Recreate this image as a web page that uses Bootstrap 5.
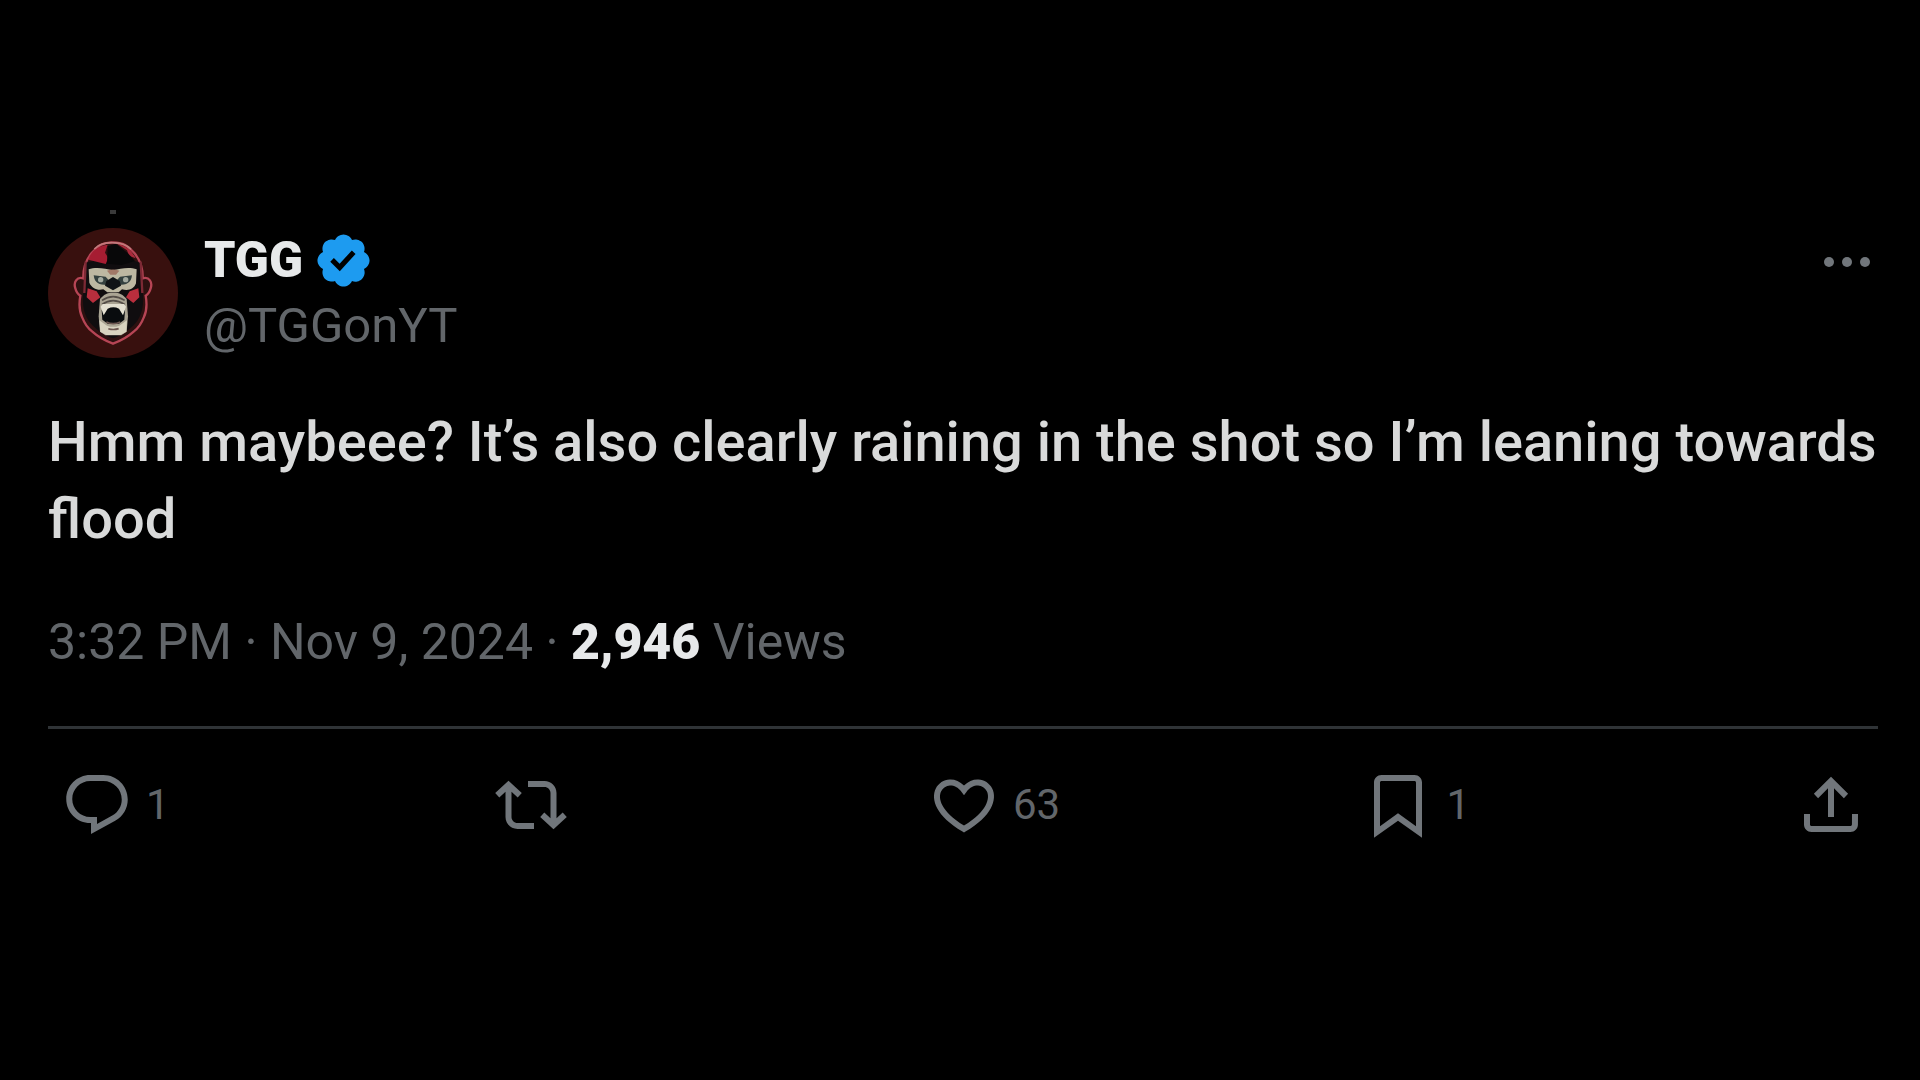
<!DOCTYPE html>
<html lang="en" data-bs-theme="dark">
<head>
<meta charset="utf-8">
<meta name="viewport" content="width=device-width, initial-scale=1">
<title>TGG on X</title>
<link href="https://cdn.jsdelivr.net/npm/bootstrap@5.3.0/dist/css/bootstrap.min.css" rel="stylesheet">
<style>
  body { background: #000; color: #e7e9ea; font-family: Roboto, "Liberation Sans", sans-serif; }
  .post { padding: 210px 42px 48px 48px; }
  .thread-line { width: 6px; height: 4px; margin: 0 0 14px 62px; background: #3a3a3a; }
  .avatar { width: 130px; height: 130px; }
  .author { gap: 26px; }
  .author-text { font-size: 49px; line-height: 65px; }
  .author-name { gap: 10px; font-size: 50px; font-weight: 900; }
  .verified { width: 61px; height: 61px; fill: #1d9bf0; }
  .muted { color: #62666a; }
  .more { width: 58px; height: 68px; margin-right: 2px; color: #71767b; }
  .post-text { margin: 46px 0 52px; font-size: 56px; line-height: 77px; font-weight: 500; color: #d9dada; }
  .meta { font-size: 50px; line-height: 65px; padding-bottom: 51px; border-bottom: 3px solid #2f3336; }
  .meta strong { font-weight: 900; color: #e7e9ea; }
  .actions { padding: 40px 11px 0 13px; }
  .action { gap: 13px; color: #71767b; font-size: 42px; line-height: 72px; }
  .action span { color: #62666a; }
  .action svg { width: 72px; height: 72px; }
  svg { display: block; fill: currentColor; flex-shrink: 0; }
</style>
</head>
<body>
<main class="container-fluid post">
  <article>
    <div class="thread-line"></div>
    <header class="d-flex justify-content-between align-items-start">
      <div class="d-flex author">
        <svg class="avatar" viewBox="55 83 390 390" role="img" aria-label="TGG avatar">
          <circle cx="250" cy="278" r="195" fill="#38100e"/>
          <path d="M250 126c-30 0-46 10-64 32-18 22-26 42-25 76-20-6-30 12-24 30 3 13 8 18 15 22-5 28-2 50 6 66 6 16 14 30 30 42 20 18 40 28 62 36 22-8 42-18 62-36 16-12 24-26 30-42 8-16 11-38 6-66 7-4 12-9 15-22 6-18-4-36-24-30 1-34-7-54-25-76-18-22-34-32-64-32z" fill="#2d1010" stroke="#b64555" stroke-width="7"/>
          <path d="M168 188c28-10 52-8 82-8s56-4 82 8l8 96c2 36-4 62-22 84-20 22-42 38-68 46-26-8-48-24-68-46-18-22-24-48-22-84z" fill="#100d0f"/>
          <path d="M176 178c8-28 32-42 58-45l-8 24 10 16-8 18z" fill="#a61d32"/>
          <path d="M262 130c28 4 44 20 56 44l-20-8-6-16z" fill="#a82a3b"/>
          <path d="M234 138l24-8 36 28 22 24-40 12-44-4z" fill="#080809"/>
          <path d="M194 146q18-20 54-19q36 0 56 20" fill="none" stroke="#c27a7c" stroke-width="5"/>
          <path d="M168 184l-4 94M333 184l5 94" fill="none" stroke="#7c2934" stroke-width="7"/>
          <path d="M177 207c20-8 50-3 73 3 23-6 50-11 71-3l-2 42c-6 18-23 23-42 18l-10 9h-34l-12-9c-19 4-34-3-42-20z" fill="#bdb8a2"/>
          <path d="M192 225l36 4 15 17-12 8c-22 0-36-5-39-29zM307 225l-36 4-15 17 12 8c22 0 36-5 39-29z" fill="#34413f"/>
          <circle cx="213" cy="238" r="8" fill="#a3aaa0"/><circle cx="288" cy="238" r="8" fill="#a3aaa0"/>
          <path d="M230 242l20-12 20 12 4 14-24 14-24-14z" fill="#101316"/>
          <path d="M232 211q18-7 37 0l-10 12h-17z" fill="#a27968"/>
          <path d="M174 264l27 9 11 18-22 17-19-17zM326 264l-26 9-11 18 22 17 18-17z" fill="#b92e3d"/>
          <path d="M211 296c12-14 20-19 40-19s28 5 40 19l4 52-4 46-16 11h-48l-16-11-4-46z" fill="#aaa493"/>
          <path d="M217 300q33-22 68 0M217 312q33-22 68 0" fill="none" stroke="#554e48" stroke-width="5"/>
          <path d="M216 330q34-28 70 0l-2 28-16 12h-34l-16-12z" fill="#090c0e"/>
          <path d="M213 319l9 26 12-20q17-8 34 0l12 20 9-26-6-8h-64z" fill="#e4e0d1"/>
          <path d="M209 360l23 16q18 7 37 0l23-16-2 34-18 10h-42l-18-10z" fill="#d8d3c0"/>
          <path d="M230 365q20 10 42 0M236 385q15 5 31 0" fill="none" stroke="#6c5750" stroke-width="5"/>
        </svg>
        <div class="author-text">
          <div class="d-flex align-items-center author-name">
            <span>TGG</span>
            <svg class="verified" viewBox="0 0 22 22" role="img" aria-label="Verified account"><path d="M20.396 11c-.018-.646-.215-1.275-.57-1.816-.354-.54-.852-.972-1.438-1.246.223-.607.27-1.264.14-1.897-.131-.634-.437-1.218-.882-1.687-.47-.445-1.053-.75-1.687-.882-.633-.13-1.29-.083-1.897.14-.273-.587-.704-1.086-1.245-1.44S11.647 1.62 11 1.604c-.646.017-1.273.213-1.813.568s-.969.854-1.24 1.44c-.608-.223-1.267-.272-1.902-.14-.635.13-1.22.436-1.69.882-.445.47-.749 1.055-.878 1.688-.13.633-.08 1.29.144 1.896-.587.274-1.087.705-1.443 1.245-.356.54-.555 1.17-.574 1.817.02.647.218 1.276.574 1.817.356.54.856.972 1.443 1.245-.224.606-.274 1.263-.144 1.896.13.634.433 1.218.877 1.688.47.443 1.054.747 1.687.878.633.132 1.29.084 1.897-.136.274.586.705 1.084 1.246 1.439.54.354 1.17.551 1.816.569.647-.016 1.276-.213 1.817-.567s.972-.854 1.245-1.44c.604.239 1.266.296 1.903.164.636-.132 1.22-.447 1.68-.907.46-.46.776-1.044.908-1.681s.075-1.299-.165-1.903c.586-.274 1.084-.705 1.439-1.246.354-.54.551-1.17.569-1.816zM9.662 14.85l-3.429-3.428 1.293-1.302 2.072 2.072 4.4-4.794 1.347 1.246z"/></svg>
          </div>
          <a href="#" class="d-block muted text-decoration-none">@TGGonYT</a>
        </div>
      </div>
      <button type="button" class="btn border-0 p-0 more" aria-label="More">
        <svg viewBox="0 0 58 68"><circle cx="11" cy="34" r="5"/><circle cx="29" cy="34" r="5"/><circle cx="47" cy="34" r="5"/></svg>
      </button>
    </header>

    <p class="post-text">Hmm maybeee? It’s also clearly raining in the shot so I’m leaning towards flood</p>

    <div class="meta muted"><time datetime="2024-11-09T15:32">3:32 PM · Nov 9, 2024</time> · <strong>2,946</strong> Views</div>

    <div class="d-flex actions">
      <div class="flex-fill w-100">
        <button type="button" class="btn border-0 p-0 d-flex align-items-center action" aria-label="1 reply">
          <svg viewBox="0 0 24 24"><path d="M1.751 10c0-4.42 3.584-8 8.005-8h4.366c4.49 0 8.129 3.64 8.129 8.13 0 2.96-1.607 5.68-4.196 7.11l-8.054 4.46v-3.69h-.067c-4.49.1-8.183-3.51-8.183-8.01zm8.005-6c-3.317 0-6.005 2.69-6.005 6 0 3.37 2.77 6.08 6.138 6.01l.351-.01h1.761v2.3l5.087-2.81c1.951-1.08 3.163-3.13 3.163-5.36 0-3.39-2.744-6.13-6.129-6.13H9.756z"/></svg>
          <span>1</span>
        </button>
      </div>
      <div class="flex-fill w-100">
        <button type="button" class="btn border-0 p-0 d-flex align-items-center action" aria-label="Repost">
          <svg viewBox="0 0 24 24"><path d="M4.5 3.88l4.432 4.14-1.364 1.46L5.5 7.55V16c0 1.1.896 2 2 2H13v2H7.5c-2.209 0-4-1.79-4-4V7.55L1.432 9.48.068 8.02 4.5 3.88zM16.5 6H11V4h5.5c2.209 0 4 1.79 4 4v8.45l2.068-1.93 1.364 1.46-4.432 4.14-4.432-4.14 1.364-1.46 2.068 1.93V8c0-1.1-.896-2-2-2z"/></svg>
        </button>
      </div>
      <div class="flex-fill w-100">
        <button type="button" class="btn border-0 p-0 d-flex align-items-center action" aria-label="63 likes">
          <svg viewBox="0 0 24 24"><path d="M16.697 5.5c-1.222-.06-2.679.51-3.89 2.16l-.805 1.09-.806-1.09C9.984 6.01 8.526 5.44 7.304 5.5c-1.243.07-2.349.78-2.91 1.91-.552 1.12-.633 2.78.479 4.82 1.074 1.97 3.257 4.27 7.129 6.61 3.87-2.34 6.052-4.64 7.126-6.61 1.111-2.04 1.03-3.7.477-4.82-.561-1.13-1.666-1.84-2.908-1.91zm4.187 7.69c-1.351 2.48-4.001 5.12-8.379 7.67l-.503.3-.504-.3c-4.379-2.55-7.029-5.19-8.382-7.67-1.36-2.5-1.41-4.86-.514-6.67.887-1.79 2.647-2.91 4.601-3.01 1.651-.09 3.368.56 4.798 2.01 1.429-1.45 3.146-2.1 4.796-2.01 1.954.1 3.714 1.22 4.601 3.01.896 1.81.846 4.17-.514 6.67z"/></svg>
          <span>63</span>
        </button>
      </div>
      <div class="flex-fill w-100">
        <button type="button" class="btn border-0 p-0 d-flex align-items-center action" aria-label="1 bookmark">
          <svg viewBox="0 0 24 24"><path d="M4 4.5C4 3.12 5.119 2 6.5 2h11C18.881 2 20 3.12 20 4.5v18.44l-8-5.71-8 5.71V4.5zM6.5 4c-.276 0-.5.22-.5.5v14.56l6-4.29 6 4.29V4.5c0-.28-.224-.5-.5-.5h-11z"/></svg>
          <span>1</span>
        </button>
      </div>
      <button type="button" class="btn border-0 p-0 d-flex align-items-center action" aria-label="Share">
        <svg viewBox="0 0 24 24"><path d="M12 2.59l5.7 5.7-1.41 1.42L13 6.41V16h-2V6.41l-3.3 3.3-1.41-1.42L12 2.59zM21 15l-.02 3.51c0 1.38-1.12 2.49-2.5 2.49H5.5C4.11 21 3 19.88 3 18.5V15h2v3.5c0 .28.22.5.5.5h12.98c.28 0 .5-.22.5-.5L19 15h2z"/></svg>
      </button>
    </div>
  </article>
</main>
<script src="https://cdn.jsdelivr.net/npm/bootstrap@5.3.0/dist/js/bootstrap.bundle.min.js"></script>
</body>
</html>
